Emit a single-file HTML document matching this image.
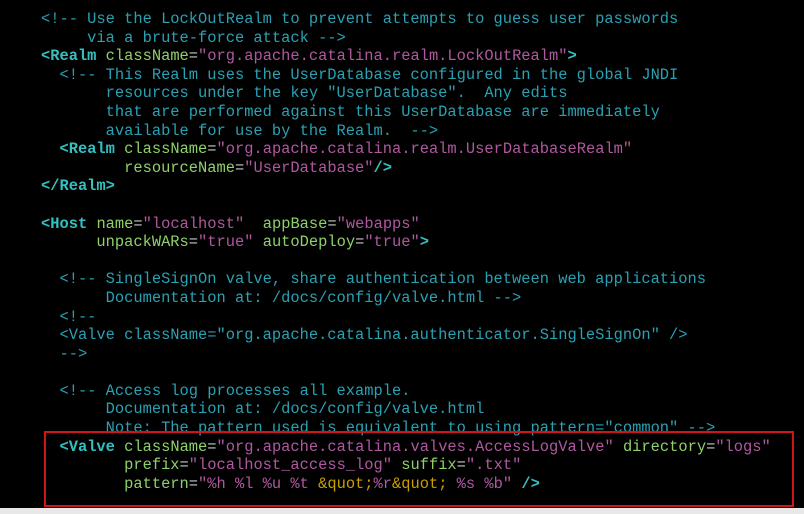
<!DOCTYPE html>
<html><head><meta charset="utf-8"><style>
html,body{margin:0;padding:0;background:#000;width:804px;height:514px;overflow:hidden;position:relative}
pre{position:absolute;left:41px;top:10px;margin:0;font-family:"Liberation Mono","DejaVu Sans Mono",monospace;font-size:15.4px;line-height:18.6px;color:#2aa1b3;letter-spacing:0}
.t{color:#34c0c0;font-weight:bold}
.a{color:#8fd16a}
.s{color:#b0589f}
.e{color:#c8c8c8}
.q{color:#c9a000}
.box{position:absolute;left:44px;top:431px;width:746px;height:72px;border:2px solid #d0141a}
.strip{position:absolute;left:0;top:508px;width:804px;height:6px;background:#e8e8e8}
</style></head><body>
<pre>&lt;!-- Use the LockOutRealm to prevent attempts to guess user passwords
     via a brute-force attack --&gt;
<span class="t">&lt;Realm</span> <span class="a">className</span><span class="e">=</span><span class="s">"org.apache.catalina.realm.LockOutRealm"</span><span class="t">&gt;</span>
  &lt;!-- This Realm uses the UserDatabase configured in the global JNDI
       resources under the key "UserDatabase".  Any edits
       that are performed against this UserDatabase are immediately
       available for use by the Realm.  --&gt;
  <span class="t">&lt;Realm</span> <span class="a">className</span><span class="e">=</span><span class="s">"org.apache.catalina.realm.UserDatabaseRealm"</span>
         <span class="a">resourceName</span><span class="e">=</span><span class="s">"UserDatabase"</span><span class="t">/&gt;</span>
<span class="t">&lt;/Realm&gt;</span>

<span class="t">&lt;Host</span> <span class="a">name</span><span class="e">=</span><span class="s">"localhost"</span>  <span class="a">appBase</span><span class="e">=</span><span class="s">"webapps"</span>
      <span class="a">unpackWARs</span><span class="e">=</span><span class="s">"true"</span> <span class="a">autoDeploy</span><span class="e">=</span><span class="s">"true"</span><span class="t">&gt;</span>

  &lt;!-- SingleSignOn valve, share authentication between web applications
       Documentation at: /docs/config/valve.html --&gt;
  &lt;!--
  &lt;Valve className="org.apache.catalina.authenticator.SingleSignOn" /&gt;
  --&gt;

  &lt;!-- Access log processes all example.
       Documentation at: /docs/config/valve.html
       Note: The pattern used is equivalent to using pattern="common" --&gt;
  <span class="t">&lt;Valve</span> <span class="a">className</span><span class="e">=</span><span class="s">"org.apache.catalina.valves.AccessLogValve"</span> <span class="a">directory</span><span class="e">=</span><span class="s">"logs"</span>
         <span class="a">prefix</span><span class="e">=</span><span class="s">"localhost_access_log"</span> <span class="a">suffix</span><span class="e">=</span><span class="s">".txt"</span>
         <span class="a">pattern</span><span class="e">=</span><span class="s">"%h %l %u %t </span><span class="q">&amp;quot;</span><span class="s">%r</span><span class="q">&amp;quot;</span><span class="s"> %s %b"</span> <span class="t">/&gt;</span></pre>
<div class="box"></div>
<div class="strip"></div>
</body></html>
